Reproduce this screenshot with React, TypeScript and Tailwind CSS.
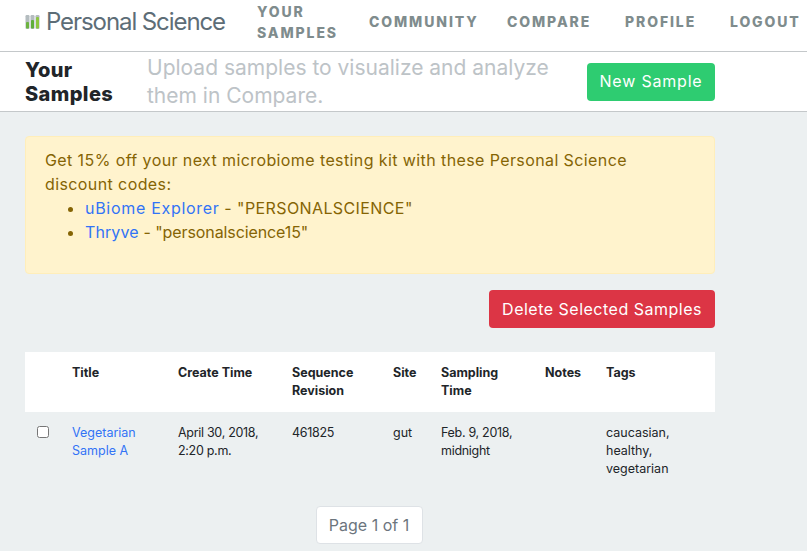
const FONT = "font-['Inter','Liberation_Sans',sans-serif]";

const NAV_LINK = "text-[14px] font-extrabold tracking-[0.135em] text-[#7f8c8d] uppercase leading-[21px]";

function LogoTubes() {
  const tubes = [
    { x: 0.5, fill: 7, color: "#6cb33f" },
    { x: 5.5, fill: 9, color: "#5fae3a" },
    { x: 10.5, fill: 12, color: "#8cc63f" },
  ];
  return (
    <svg width="16" height="16" viewBox="0 0 16 16" className="flex-none">
      {tubes.map((t) => (
        <g key={t.x}>
          <rect x={t.x} y={1} width={4} height={14} rx={1.2} fill="#b4bcbf" />
          <rect x={t.x + 0.5} y={15 - t.fill} width={3} height={t.fill - 0.5} rx={1} fill={t.color} />
        </g>
      ))}
    </svg>
  );
}

function Header() {
  return (
    <nav className="flex h-[52px] items-center border-b border-[#c4c8ca] bg-white pb-[8px] pl-[25px]">
      <div className="flex w-[232px] flex-none items-center gap-[5px]">
        <LogoTubes />
        <span className="text-[24px] tracking-[-0.045em] whitespace-nowrap text-[#5d6d77]">Personal Science</span>
      </div>
      <a className={`${NAV_LINK} w-[112px] flex-none`}>Your Samples</a>
      <a className={`${NAV_LINK} w-[138px] flex-none`}>Community</a>
      <a className={`${NAV_LINK} w-[118px] flex-none`}>Compare</a>
      <a className={`${NAV_LINK} w-[105px] flex-none`}>Profile</a>
      <a className={NAV_LINK}>Logout</a>
    </nav>
  );
}

function SubHeader() {
  return (
    <div className="flex h-[60px] items-center border-b border-[#c4c8ca] bg-white pl-[25px]">
      <h1 className="w-[122px] flex-none text-[20px] leading-[24px] font-extrabold tracking-[0.4px] text-[#212529]">
        Your Samples
      </h1>
      <p className="w-[440px] flex-none text-[21px] leading-[28px] text-[#bdc3c7]">
        Upload samples to visualize and analyze them in Compare.
      </p>
      <button className="h-[38px] w-[128px] flex-none rounded bg-[#2ecc71] pb-[1px] text-[16px] tracking-[0.8px] text-white">
        New Sample
      </button>
    </div>
  );
}

function Discount() {
  return (
    <div className="h-[138px] rounded border border-[#ffeeba] bg-[#fff3cd] px-[19px] py-[11px] text-[16px] leading-[24px] tracking-[0.4px] text-[#856404]">
      <p>Get 15% off your next microbiome testing kit with these Personal Science discount codes:</p>
      <ul className="list-disc pl-[40px]">
        <li>
          <a className="tracking-[0.7px] text-[#3273f6]">uBiome Explorer</a> - "PERSONALSCIENCE"
        </li>
        <li>
          <a className="tracking-[0.1px] text-[#3273f6]">Thryve</a>{" "}
          <span className="tracking-[-0.1px]">- "personalscience15"</span>
        </li>
      </ul>
    </div>
  );
}

function SamplesTable() {
  const th = "px-[12px] pt-[12px] pb-[12px] align-top text-left font-bold";
  const td = "px-[12px] pt-[12px] align-top font-normal";
  return (
    <table className="w-full table-fixed border-collapse text-[12.5px] leading-[18px] text-[#212529]">
      <colgroup>
        <col className="w-[35px]" />
        <col className="w-[106px]" />
        <col className="w-[114px]" />
        <col className="w-[101px]" />
        <col className="w-[48px]" />
        <col className="w-[104px]" />
        <col className="w-[61px]" />
        <col />
      </colgroup>
      <thead className="bg-white">
        <tr className="h-[60px]">
          <th className={th}></th>
          <th className={th}>Title</th>
          <th className={th}>Create Time</th>
          <th className={th}>Sequence Revision</th>
          <th className={th}>Site</th>
          <th className={th}>Sampling Time</th>
          <th className={th}>Notes</th>
          <th className={th}>Tags</th>
        </tr>
      </thead>
      <tbody>
        <tr>
          <td className={td}>
            <input type="checkbox" className="mt-[2px] block h-[12px] w-[12px]" />
          </td>
          <td className={`${td} text-[#3273f6]`}>Vegetarian Sample A</td>
          <td className={`${td} tracking-[-0.3px]`}>April 30, 2018, 2:20 p.m.</td>
          <td className={`${td} tracking-[-0.3px]`}>461825</td>
          <td className={td}>gut</td>
          <td className={`${td} tracking-[-0.3px]`}>Feb. 9, 2018, midnight</td>
          <td className={td}></td>
          <td className={td}>caucasian, healthy, vegetarian</td>
        </tr>
      </tbody>
    </table>
  );
}

export default function App() {
  return (
    <div className={`${FONT} h-[551px] w-[807px] overflow-hidden bg-[#ecf0f1]`}>
      <Header />
      <SubHeader />
      <main className="ml-[25px] w-[690px] pt-[24px]">
        <Discount />
        <div className="mt-[16px] flex justify-end">
          <button className="h-[38px] w-[226px] rounded bg-[#dc3545] pb-[1px] text-[16px] tracking-[0.5px] text-white">
            Delete Selected Samples
          </button>
        </div>
        <div className="mt-[24px]">
          <SamplesTable />
        </div>
        <div className="mt-[28px] flex justify-center pr-[2px]">
          <span className="flex h-[38px] w-[107px] items-center justify-center rounded border border-[#dee2e6] bg-white text-[16px] text-[#6c757d]">
            Page 1 of 1
          </span>
        </div>
      </main>
    </div>
  );
}
